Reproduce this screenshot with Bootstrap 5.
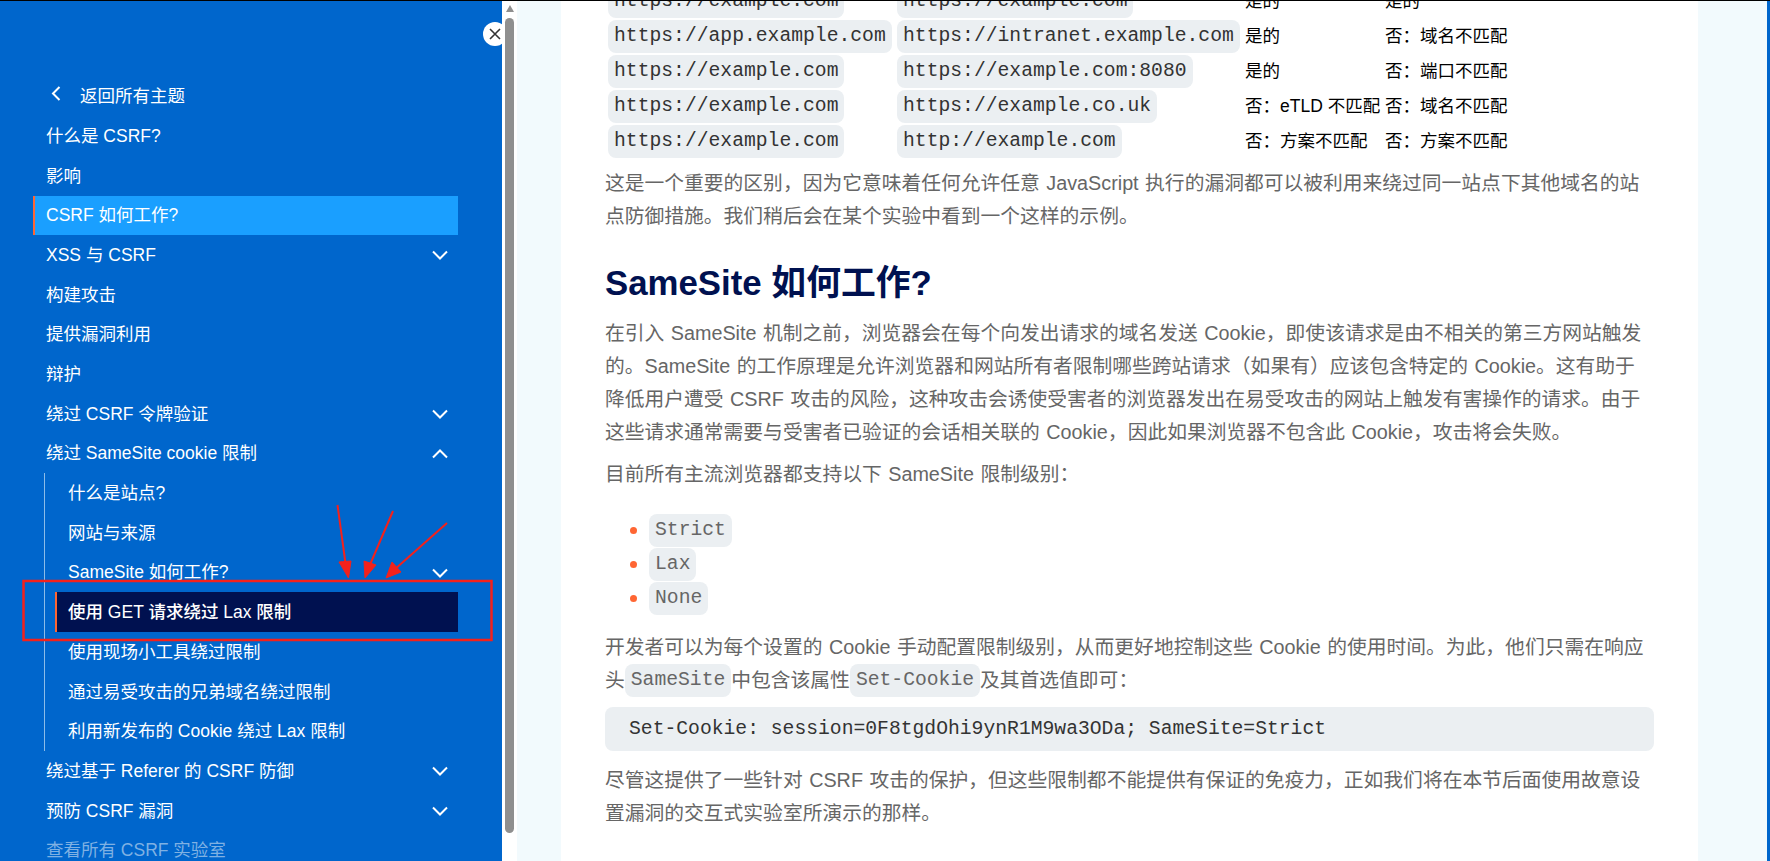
<!DOCTYPE html>
<html lang="zh">
<head>
<meta charset="utf-8">
<title>SameSite</title>
<link href="https://cdn.jsdelivr.net/npm/bootstrap@5.3.0/dist/css/bootstrap.min.css" rel="stylesheet">
<style>
html,body{height:100%;overflow:hidden}
body{font-family:"Liberation Sans","Noto Sans CJK SC",sans-serif;background:#f2fafd}
.shell{height:861px;border-top:1px solid #000;overflow:hidden;position:relative}
.side{width:502px;flex:none;background:#0066cc;position:relative;padding:75.5px 0 0 33px}
.tree,.subtree{list-style:none;margin:0;padding:0}
.tree{width:425px}
.entry{height:39.7px;display:flex;align-items:center;justify-content:space-between;padding:0 10px 0 13px;color:#fff;font-size:17.5px;text-decoration:none;white-space:nowrap}
.entry:hover{color:#fff}
.entry svg{flex:none}
.back{justify-content:flex-start;gap:19px;padding-left:18px}
.back svg{position:relative;top:-3px}
.curr{background:#1a9fff;border-left:2px solid #ff6633;padding-left:11px}
.subtree{margin-left:11px;border-left:1px solid #8cbce8}
.subtree .entry{padding-left:23px}
.subtree .dark{background:#001150;border-left:2px solid #ff6633;margin-left:10px;padding-left:11px;font-weight:500}
.dim{color:#7fb1e3}
.shut{position:absolute;left:483px;top:21px;width:24px;height:24px;border-radius:50%;background:#fff;display:flex;align-items:center;justify-content:center}
.rail{width:15px;flex:none;background:#fff;position:relative;z-index:2;display:flex;flex-direction:column;align-items:center;padding-top:4px}
.rail-tip{width:0;height:0;border-left:4.5px solid transparent;border-right:4.5px solid transparent;border-bottom:7px solid #8f8f8f}
.rail-thumb{width:9px;height:815px;margin-top:6px;background:#8f8f8f;border-radius:5px}
.outer{flex:1;padding:0 69px 0 44px;overflow:hidden}
.edge{width:3px;flex:none;background:#0066cc}
.sheet{background:#fff;height:862px;padding:0 44px;overflow:hidden;font-size:19.78px;line-height:33px;word-spacing:1px;color:#666}
.sheet table{margin:-17px 0 8px 3px;border-collapse:collapse;color:#000;font-size:17.5px;line-height:33px;word-spacing:0}
.sheet td{padding:1px 0;vertical-align:middle;white-space:nowrap}
.c1{width:289px}.c2{width:348px}.c3{width:140px}
.chip{font-family:"Liberation Mono",monospace;font-size:19.69px;word-spacing:0;background:#ebeff2;border-radius:8px;padding:0 6px;display:inline-block;height:33px;line-height:33px;color:#666;vertical-align:top}
.sheet td .chip{color:#333}
.sheet p{margin:0 0 9.6px;max-width:1042px}
.sheet h2{font-size:34.8px;font-weight:700;word-spacing:0;color:#001150;line-height:1.2;margin:29px 0 13px}
.bullets{margin:23px 0 15px;padding:0 0 0 44px;list-style:none}
.bullets li{height:34px;position:relative}
.bullets li::before{content:"";position:absolute;left:-19px;top:13px;width:7px;height:7px;border-radius:50%;background:#ff6633}
.snippet{font-family:"Liberation Mono",monospace;font-size:19.69px;word-spacing:0;background:#ebeff2;color:#333;border-radius:8px;height:44px;line-height:44px;padding:0 24px;margin:7px 0 13px;overflow:hidden}
.marks{position:absolute;left:0;top:0;z-index:3;pointer-events:none}
</style>
</head>
<body>
<div class="shell d-flex">
  <aside class="side">
    <ul class="tree">
      <li><a class="entry back" href="#"><svg width="10" height="15" viewBox="0 0 10 15"><polyline points="8.5,1 2,7.5 8.5,14" fill="none" stroke="#fff" stroke-width="2"/></svg><span>返回所有主题</span></a></li>
      <li><a class="entry" href="#">什么是 CSRF?</a></li>
      <li><a class="entry" href="#">影响</a></li>
      <li><a class="entry curr" href="#">CSRF 如何工作?</a></li>
      <li><a class="entry" href="#">XSS 与 CSRF<svg width="16" height="10" viewBox="0 0 16 10"><polyline points="1,1.5 8,8.5 15,1.5" fill="none" stroke="#fff" stroke-width="2"/></svg></a></li>
      <li><a class="entry" href="#">构建攻击</a></li>
      <li><a class="entry" href="#">提供漏洞利用</a></li>
      <li><a class="entry" href="#">辩护</a></li>
      <li><a class="entry" href="#">绕过 CSRF 令牌验证<svg width="16" height="10" viewBox="0 0 16 10"><polyline points="1,1.5 8,8.5 15,1.5" fill="none" stroke="#fff" stroke-width="2"/></svg></a></li>
      <li><a class="entry" href="#">绕过 SameSite cookie 限制<svg width="16" height="10" viewBox="0 0 16 10"><polyline points="1,8.5 8,1.5 15,8.5" fill="none" stroke="#fff" stroke-width="2"/></svg></a>
        <ul class="subtree">
          <li><a class="entry" href="#">什么是站点?</a></li>
          <li><a class="entry" href="#">网站与来源</a></li>
          <li><a class="entry" href="#">SameSite 如何工作?<svg width="16" height="10" viewBox="0 0 16 10"><polyline points="1,1.5 8,8.5 15,1.5" fill="none" stroke="#fff" stroke-width="2"/></svg></a></li>
          <li><a class="entry dark" href="#">使用 GET 请求绕过 Lax 限制</a></li>
          <li><a class="entry" href="#">使用现场小工具绕过限制</a></li>
          <li><a class="entry" href="#">通过易受攻击的兄弟域名绕过限制</a></li>
          <li><a class="entry" href="#">利用新发布的 Cookie 绕过 Lax 限制</a></li>
        </ul>
      </li>
      <li><a class="entry" href="#">绕过基于 Referer 的 CSRF 防御<svg width="16" height="10" viewBox="0 0 16 10"><polyline points="1,1.5 8,8.5 15,1.5" fill="none" stroke="#fff" stroke-width="2"/></svg></a></li>
      <li><a class="entry" href="#">预防 CSRF 漏洞<svg width="16" height="10" viewBox="0 0 16 10"><polyline points="1,1.5 8,8.5 15,1.5" fill="none" stroke="#fff" stroke-width="2"/></svg></a></li>
      <li><a class="entry dim" href="#">查看所有 CSRF 实验室</a></li>
    </ul>
    <div class="shut"><svg width="12" height="12" viewBox="0 0 12 12"><path d="M1 1L11 11M11 1L1 11" stroke="#333" stroke-width="1.6"/></svg></div>
  </aside>
  <div class="rail"><div class="rail-tip"></div><div class="rail-thumb"></div></div>
  <main class="outer">
    <div class="sheet">
      <table>
        <tr><td class="c1"><span class="chip">https://example.com</span></td><td class="c2"><span class="chip">https://example.com</span></td><td class="c3">是的</td><td>是的</td></tr>
        <tr><td><span class="chip">https://app.example.com</span></td><td><span class="chip">https://intranet.example.com</span></td><td>是的</td><td>否：域名不匹配</td></tr>
        <tr><td><span class="chip">https://example.com</span></td><td><span class="chip">https://example.com:8080</span></td><td>是的</td><td>否：端口不匹配</td></tr>
        <tr><td><span class="chip">https://example.com</span></td><td><span class="chip">https://example.co.uk</span></td><td>否：eTLD 不匹配</td><td>否：域名不匹配</td></tr>
        <tr><td><span class="chip">https://example.com</span></td><td><span class="chip">http://example.com</span></td><td>否：方案不匹配</td><td>否：方案不匹配</td></tr>
      </table>
      <p>这是一个重要的区别，因为它意味着任何允许任意 JavaScript 执行的漏洞都可以被利用来绕过同一站点下其他域名的站点防御措施。我们稍后会在某个实验中看到一个这样的示例。</p>
      <h2>SameSite 如何工作?</h2>
      <p>在引入 SameSite 机制之前，浏览器会在每个向发出请求的域名发送 Cookie，即使该请求是由不相关的第三方网站触发的。SameSite 的工作原理是允许浏览器和网站所有者限制哪些跨站请求（如果有）应该包含特定的 Cookie。这有助于降低用户遭受 CSRF 攻击的风险，这种攻击会诱使受害者的浏览器发出在易受攻击的网站上触发有害操作的请求。由于这些请求通常需要与受害者已验证的会话相关联的 Cookie，因此如果浏览器不包含此 Cookie，攻击将会失败。</p>
      <p>目前所有主流浏览器都支持以下 SameSite 限制级别：</p>
      <ul class="bullets">
        <li><span class="chip">Strict</span></li>
        <li><span class="chip">Lax</span></li>
        <li><span class="chip">None</span></li>
      </ul>
      <p>开发者可以为每个设置的 Cookie 手动配置限制级别，从而更好地控制这些 Cookie 的使用时间。为此，他们只需在响应头<span class="chip">SameSite</span>中包含该属性<span class="chip">Set-Cookie</span>及其首选值即可：</p>
      <div class="snippet">Set-Cookie: session=0F8tgdOhi9ynR1M9wa3ODa; SameSite=Strict</div>
      <p>尽管这提供了一些针对 CSRF 攻击的保护，但这些限制都不能提供有保证的免疫力，正如我们将在本节后面使用故意设置漏洞的交互式实验室所演示的那样。</p>
    </div>
  </main>
  <div class="edge"></div>
  <svg class="marks" width="520" height="660" viewBox="0 0 520 660">
    <rect x="23.5" y="580" width="468" height="59" fill="none" stroke="#f4211b" stroke-width="2.5"/>
    <g fill="#f4211b" stroke="#f4211b">
      <line x1="337.5" y1="504" x2="346" y2="566" stroke-width="2"/>
      <polygon points="348.5,577 339,561 351,560" stroke-width="1"/>
      <line x1="393" y1="510" x2="369" y2="566" stroke-width="2"/>
      <polygon points="365,577 364,560 376,564" stroke-width="1"/>
      <line x1="447" y1="522" x2="394" y2="569" stroke-width="2"/>
      <polygon points="386,577 392,561 401,571" stroke-width="1"/>
    </g>
  </svg>
</div>
<script src="https://cdn.jsdelivr.net/npm/bootstrap@5.3.0/dist/js/bootstrap.bundle.min.js"></script>
</body>
</html>
